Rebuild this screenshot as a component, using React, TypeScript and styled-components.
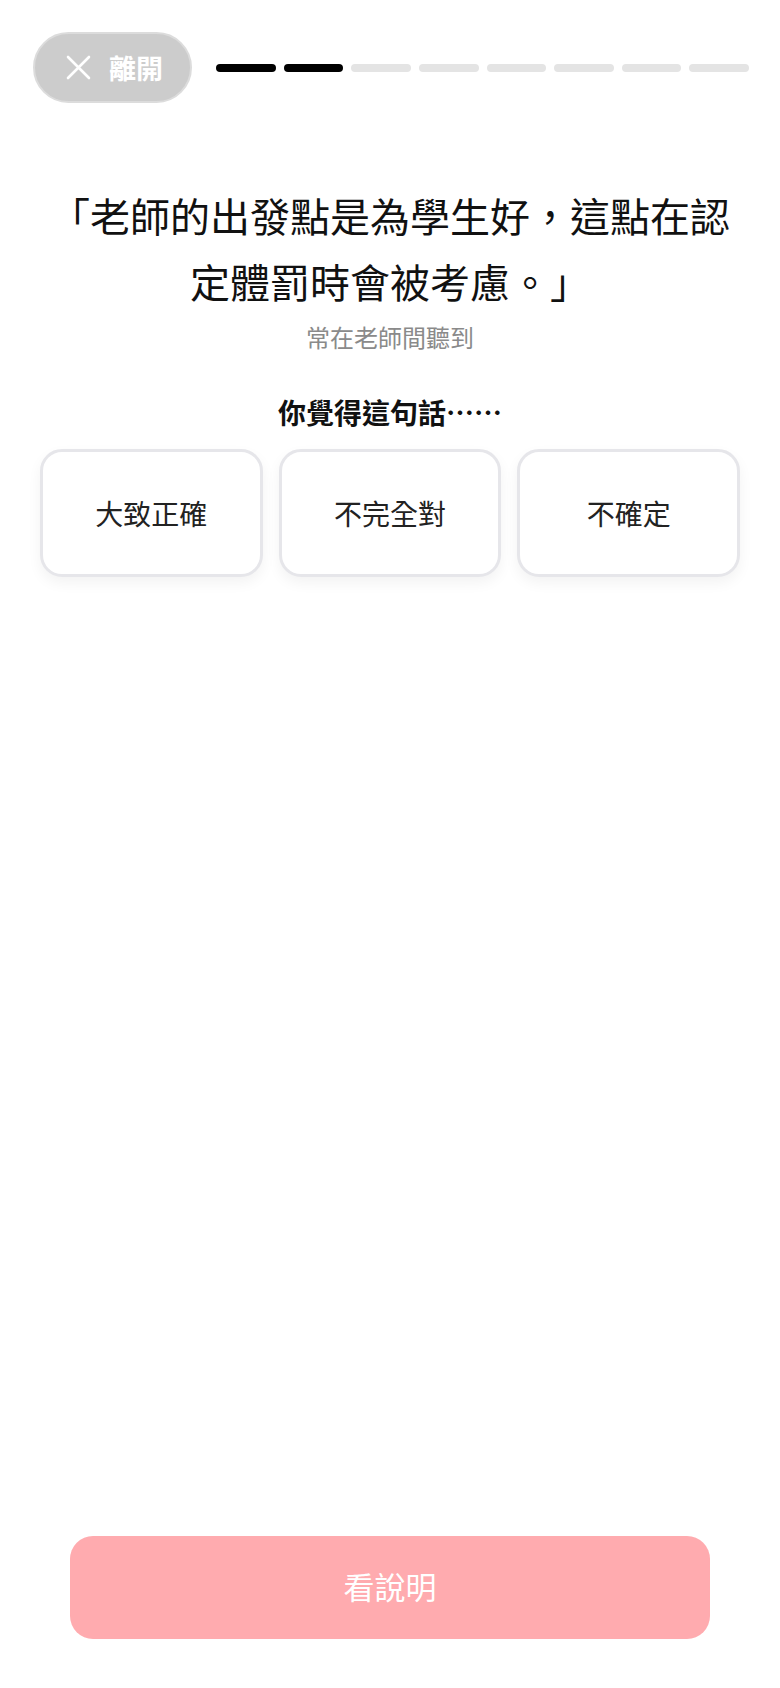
import { createGlobalStyle, styled } from "styled-components";

const GlobalStyle = createGlobalStyle`
    html, body {
        margin: 0;
        padding: 0;
        background: #ffffff;
    }
    body {
        font-family: "Noto Sans CJK TC", "Noto Sans", sans-serif;
    }
`;

const StyledPage = styled.main`
    min-height: 100vh;
    display: flex;
    flex-direction: column;
    box-sizing: border-box;
`;

const StyledHeader = styled.header`
    display: flex;
    align-items: center;
    gap: 24px;
    padding: 32px 31px 0 33px;
`;

const StyledLeaveButton = styled.button`
    display: flex;
    align-items: center;
    justify-content: center;
    gap: 18px;
    flex-shrink: 0;
    width: 159px;
    height: 71px;
    box-sizing: border-box;
    padding: 0 0 0 4px;
    border: 2px solid #dcdcdc;
    border-radius: 36px;
    background: #cccccc;
    color: #ffffff;
    font-family: "Noto Sans CJK TC", sans-serif;
    font-size: 27px;
    font-weight: 700;
    cursor: pointer;
`;

const StyledProgress = styled.div`
    flex: 1;
    display: flex;
    gap: 8px;
`;

const StyledStep = styled.span<{ done: boolean }>`
    flex: 1;
    height: 8px;
    border-radius: 4px;
    background: ${({ done }) => (done ? "#000000" : "#e4e4e4")};
`;

const StyledQuote = styled.h1`
    margin: 79px 0 0;
    padding: 0 38px;
    text-align: center;
    font-size: 40px;
    line-height: 66px;
    font-weight: 400;
    color: #111111;
`;

const StyledSource = styled.p`
    margin: 8px 0 0;
    text-align: center;
    font-size: 24px;
    line-height: 30px;
    color: #8a8a8a;
`;

const StyledQuestion = styled.h2`
    margin: 42px 0 0;
    text-align: center;
    font-size: 28px;
    line-height: 36px;
    font-weight: 700;
    color: #111111;
`;

const StyledOptions = styled.div`
    display: grid;
    grid-template-columns: repeat(3, 1fr);
    gap: 16px;
    padding: 0 40px;
    margin-top: 19px;
`;

const StyledOption = styled.button`
    height: 128px;
    box-sizing: border-box;
    border: 3px solid #e6e6ea;
    border-radius: 22px;
    background: #ffffff;
    box-shadow: 0 6px 14px rgba(0, 0, 0, 0.05);
    color: #222222;
    font-family: "Noto Sans CJK TC", sans-serif;
    font-size: 28px;
    font-weight: 400;
    cursor: pointer;
`;

const StyledFooter = styled.footer`
    margin-top: auto;
    padding: 0 70px 49px;
`;

const StyledExplainButton = styled.button`
    width: 100%;
    height: 103px;
    border: none;
    border-radius: 23px;
    background: #ffabaf;
    color: #ffffff;
    font-family: "Noto Sans CJK TC", sans-serif;
    font-size: 31px;
    font-weight: 400;
    padding-bottom: 6px;
    cursor: pointer;
`;

const steps = [true, true, false, false, false, false, false, false];
const options = ["大致正確", "不完全對", "不確定"];

export default function App() {
    return (
        <>
            <GlobalStyle />
            <StyledPage>
                <StyledHeader>
                    <StyledLeaveButton>
                        <svg width="25" height="25" viewBox="0 0 25 25" fill="none" stroke="#ffffff" strokeWidth="2.6" strokeLinecap="round">
                            <path d="M2 2L23 23M23 2L2 23" />
                        </svg>
                        離開
                    </StyledLeaveButton>
                    <StyledProgress>
                        {steps.map((done, i) => (
                            <StyledStep key={i} done={done} />
                        ))}
                    </StyledProgress>
                </StyledHeader>
                <StyledQuote>「老師的出發點是為學生好，這點在認定體罰時會被考慮。」</StyledQuote>
                <StyledSource>常在老師間聽到</StyledSource>
                <StyledQuestion>你覺得這句話……</StyledQuestion>
                <StyledOptions>
                    {options.map((label) => (
                        <StyledOption key={label}>{label}</StyledOption>
                    ))}
                </StyledOptions>
                <StyledFooter>
                    <StyledExplainButton>看說明</StyledExplainButton>
                </StyledFooter>
            </StyledPage>
        </>
    );
}
